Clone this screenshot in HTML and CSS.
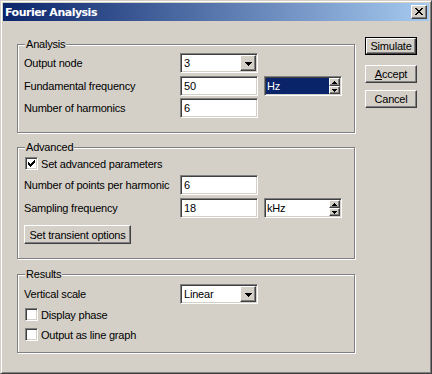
FILE: index.html
```html
<!DOCTYPE html>
<html>
<head>
<meta charset="utf-8">
<link rel="stylesheet" href="styles.css">
</head>
<body>
<div class="window">
  <div class="titlebar">
    <span class="title">Fourier Analysis</span>
    <span class="close raised"><svg width="8" height="7" viewBox="0 0 8 7"><path d="M0 0h2v1h-2zM6 0h2v1h-2zM1 1h2v1h-2zM5 1h2v1h-2zM2 2h4v1h-4zM3 3h2v1h-2zM2 4h4v1h-4zM1 5h2v1h-2zM5 5h2v1h-2zM0 6h2v1h-2zM6 6h2v1h-2z" fill="#000"/></svg></span>
  </div>
  <div class="main">
    <div class="groups">
      <section class="group g-analysis">
        <span class="legend">Analysis</span>
        <div class="row">
          <span class="lbl">Output node</span>
          <div class="combo sunken"><span class="val">3</span><span class="dd raised"><svg width="7" height="4" viewBox="0 0 7 4"><path d="M0 0h7v1h-1v1h-1v1h-1v1h-1v-1h-1v-1h-1v-1h-1z" fill="#000"/></svg></span></div>
        </div>
        <div class="row gap3">
          <span class="lbl">Fundamental frequency</span>
          <div class="edit sunken"><span class="val">50</span></div>
          <div class="spin sunken"><span class="val sel">Hz</span><span class="spinbtns"><span class="sb raised"><svg width="5" height="3" viewBox="0 0 5 3"><path d="M2 0h1v1h1v1h1v1h-5v-1h1v-1h1z" fill="#000"/></svg></span><span class="sb raised"><svg width="5" height="3" viewBox="0 0 5 3"><path d="M0 0h5v1h-1v1h-1v1h-1v-1h-1v-1h-1z" fill="#000"/></svg></span></span></div>
        </div>
        <div class="row gap2">
          <span class="lbl">Number of harmonics</span>
          <div class="edit sunken"><span class="val">6</span></div>
        </div>
      </section>

      <section class="group g-advanced">
        <span class="legend">Advanced</span>
        <label class="check first">
          <span class="chk sunken"><svg width="7" height="7" viewBox="0 0 7 7"><path d="M6 0h1v1h-1zM5 1h2v1h-2zM0 2h1v1h-1zM4 2h3v1h-3zM0 3h2v1h-2zM3 3h3v1h-3zM0 4h5v1h-5zM1 5h3v1h-3zM2 6h1v1h-1z" fill="#000"/></svg></span>
          <span>Set advanced parameters</span>
        </label>
        <div class="row gap5">
          <span class="lbl">Number of points per harmonic</span>
          <div class="edit sunken"><span class="val">6</span></div>
        </div>
        <div class="row gap3">
          <span class="lbl">Sampling frequency</span>
          <div class="edit sunken"><span class="val">18</span></div>
          <div class="spin sunken"><span class="val">kHz</span><span class="spinbtns"><span class="sb raised"><svg width="5" height="3" viewBox="0 0 5 3"><path d="M2 0h1v1h1v1h1v1h-5v-1h1v-1h1z" fill="#000"/></svg></span><span class="sb raised"><svg width="5" height="3" viewBox="0 0 5 3"><path d="M0 0h5v1h-1v1h-1v1h-1v-1h-1v-1h-1z" fill="#000"/></svg></span></span></div>
        </div>
        <div class="pbtn raised">Set transient options</div>
      </section>

      <section class="group g-results">
        <span class="legend">Results</span>
        <div class="row">
          <span class="lbl">Vertical scale</span>
          <div class="combo sunken"><span class="val">Linear</span><span class="dd raised"><svg width="7" height="4" viewBox="0 0 7 4"><path d="M0 0h7v1h-1v1h-1v1h-1v1h-1v-1h-1v-1h-1v-1h-1z" fill="#000"/></svg></span></div>
        </div>
        <label class="check gap4">
          <span class="chk sunken"></span>
          <span>Display phase</span>
        </label>
        <label class="check gap7">
          <span class="chk sunken"></span>
          <span>Output as line graph</span>
        </label>
      </section>
    </div>

    <div class="buttons">
      <div class="btn default"><span class="btn-in raised">Simulate</span></div>
      <div class="btn raised b-accept"><span><u>A</u>ccept</span></div>
      <div class="btn raised b-cancel"><span>Cancel</span></div>
    </div>
  </div>
</div>
</body>
</html>
```
FILE: styles.css
```css
html, body {
  margin: 0;
  padding: 0;
  background: #d4d0c8;
}
body {
  font: 11px "Liberation Sans", Arial, sans-serif;
  letter-spacing: -0.2px;
  color: #000;
}
.window {
  width: 432px;
  height: 374px;
  box-sizing: border-box;
  background: #d4d0c8;
  border: 1px solid;
  border-color: #d4d0c8 #404040 #404040 #d4d0c8;
  box-shadow: inset 1px 1px #fff, inset -1px -1px #808080;
  padding: 2px;
}
.raised {
  box-sizing: border-box;
  background: #d4d0c8;
  border: 1px solid;
  border-color: #fff #404040 #404040 #fff;
  box-shadow: inset -1px -1px #808080;
}
.sunken {
  box-sizing: border-box;
  background: #fff;
  border: 1px solid;
  border-color: #808080 #fff #fff #808080;
  box-shadow: inset 1px 1px #404040, inset -1px -1px #d4d0c8;
}
svg { display: block; }

.titlebar {
  height: 18px;
  background: linear-gradient(to right, #0a246a, #a6caf0);
  display: flex;
  align-items: center;
  justify-content: space-between;
  padding: 0 2px 0 2px;
}
.title {
  color: #fff;
  font: bold 11px "DejaVu Sans", Verdana, sans-serif;
  letter-spacing: -0.5px;
}
.close {
  width: 16px;
  height: 14px;
  display: flex;
  align-items: center;
  justify-content: center;
  padding-bottom: 1px;
  padding-right: 1px;
}

.main {
  display: flex;
  align-items: flex-start;
  padding-left: 14px;
}
.groups {
  width: 339px;
  padding-top: 23px;
  display: flex;
  flex-direction: column;
}
.group {
  position: relative;
  box-sizing: border-box;
  width: 338px;
  border: 1px solid #808080;
  box-shadow: inset 1px 1px #fff, 1px 1px #fff;
  padding: 8px 0 0 6px;
}
.g-analysis { height: 89px; }
.g-advanced { height: 112px; margin-top: 14px; padding-top: 9px; }
.g-results { height: 79px; margin-top: 15px; padding-top: 9px; }
.legend {
  position: absolute;
  top: -7px;
  left: 7px;
  padding: 0 1px;
  line-height: 13px;
  background: #d4d0c8;
}

.row {
  display: flex;
  align-items: center;
  height: 20px;
}
.gap2 { margin-top: 2px; }
.gap3 { margin-top: 3px; }
.gap4 { margin-top: 4px; }
.gap5 { margin-top: 5px; }
.gap7 { margin-top: 7px; }
.lbl {
  width: 156px;
  flex: none;
}
.edit, .combo, .spin {
  width: 78px;
  height: 20px;
  padding: 1px;
  display: flex;
  align-items: center;
  flex: none;
}
.val {
  flex: 1;
  height: 16px;
  line-height: 16px;
  padding-left: 2px;
  white-space: nowrap;
}
.combo .dd {
  width: 16px;
  height: 16px;
  display: flex;
  align-items: center;
  justify-content: center;
  padding-top: 1px;
}
.spin { margin-left: 6px; }
.spin .val { padding-left: 1px; }
.sel {
  background: #0a246a;
  color: #fff;
}
.spinbtns {
  width: 11px;
  height: 16px;
  display: flex;
  flex-direction: column;
}
.sb {
  height: 8px;
  display: flex;
  align-items: center;
  justify-content: center;
}

.check {
  display: flex;
  align-items: center;
  height: 13px;
  padding-left: 1px;
}
.chk {
  width: 13px;
  height: 13px;
  display: flex;
  align-items: center;
  justify-content: center;
  margin-right: 3px;
}
.pbtn {
  width: 107px;
  height: 19px;
  margin-top: 7px;
  display: flex;
  align-items: center;
  justify-content: center;
}

.buttons {
  width: 52px;
  margin-left: 9px;
  padding-top: 16px;
  display: flex;
  flex-direction: column;
}
.btn {
  width: 52px;
  height: 18px;
  box-sizing: border-box;
  display: flex;
  align-items: center;
  justify-content: center;
}
.default {
  border: 1px solid #000;
}
.btn-in {
  width: 100%;
  height: 100%;
  display: flex;
  align-items: center;
  justify-content: center;
}
.b-accept { margin-top: 10px; }
.b-cancel { margin-top: 7px; }
```
